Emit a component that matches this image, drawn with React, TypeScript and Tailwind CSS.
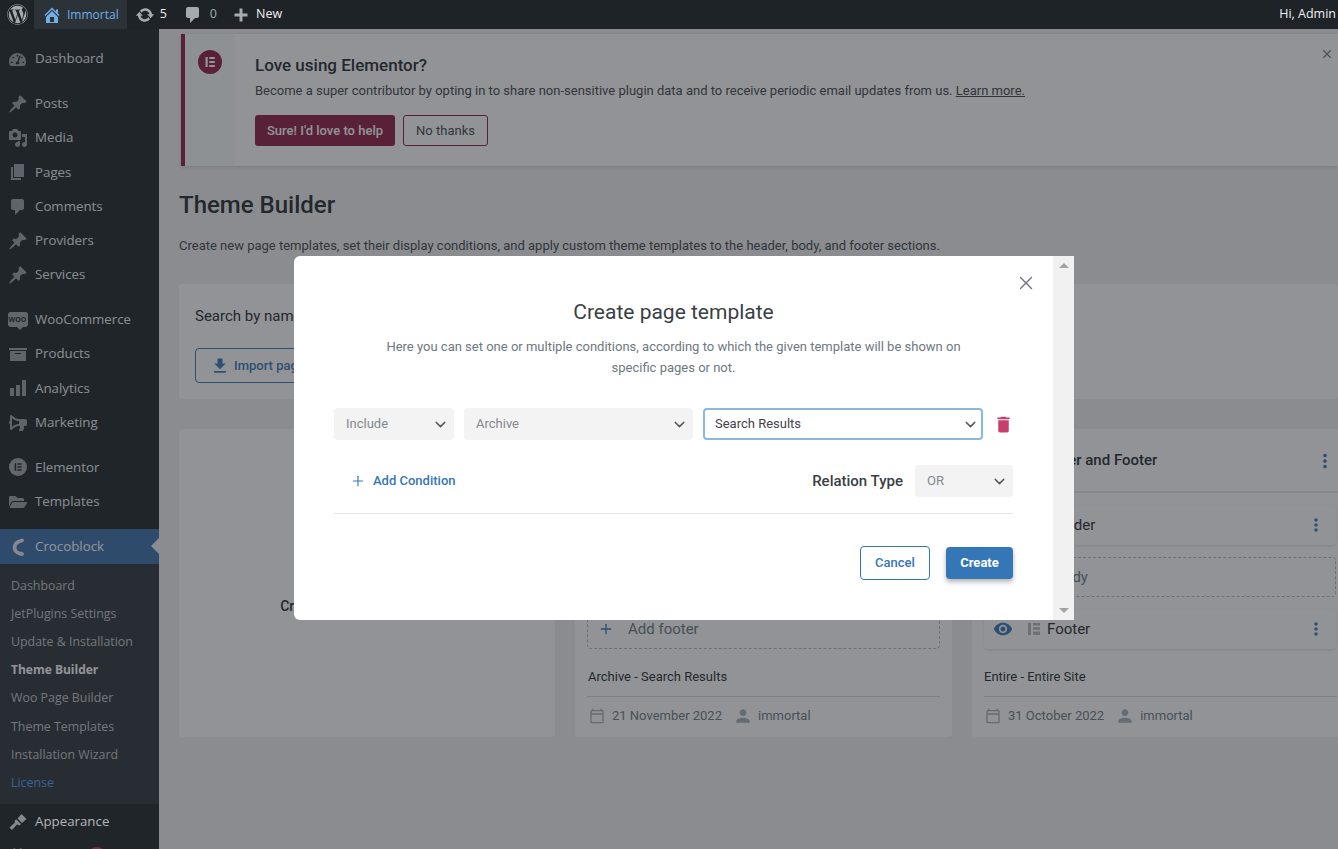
import React from "react";
import { FaWordpress, FaTachometerAlt, FaBullhorn, FaFolderOpen, FaPlug } from "react-icons/fa";
import { MdDelete, MdVisibility, MdMoreVert, MdPerson, MdFileDownload, MdOutlineCalendarToday } from "react-icons/md";
import { ChevronDown, X, Plus } from "lucide-react";

const iconC = "text-[#9ca1a6]";

const Dash = ({ d, size = 20 }: { d: string; size?: number }) => (
  <svg width={size} height={size} viewBox="0 0 20 20" fill="currentColor">
    <path d={d} fillRule="evenodd" />
  </svg>
);
const pinD = "M10.440 3.020l1.820-1.820 6.360 6.350-1.830 1.820c-1.050-.68-2.480-.57-3.410.36l-.75.75c-.92.93-1.040 2.350-.35 3.410l-1.830 1.820-2.410-2.410-2.800 2.790c-.42.42-3.380 2.710-3.800 2.290s1.860-3.390 2.280-3.810l2.790-2.790L4.100 9.360l1.830-1.820c1.050.69 2.480.57 3.400-.36l.75-.75c.93-.92 1.050-2.350.36-3.410z";
const mediaD = "M13 11V4c0-.55-.45-1-1-1h-1.670L9 1H5L3.670 3H2c-.55 0-1 .45-1 1v7c0 .55.45 1 1 1h10c.55 0 1-.45 1-1zM7 4.500c1.380 0 2.500 1.120 2.500 2.500S8.380 9.500 7 9.500 4.500 8.380 4.500 7 5.620 4.500 7 4.500zM14 6h5v10.500c0 1.380-1.120 2.500-2.500 2.500S14 17.880 14 16.500s1.120-2.500 2.500-2.500c.17 0 .34.020.5.050V9h-3V6zm-4 8.050V13h2v3.500c0 1.380-1.120 2.500-2.500 2.500S7 17.880 7 16.500 8.120 14 9.500 14c.17 0 .34.020.5.050z";
const pageD = "M6 15V2h10v13H6zm-1 1h8v2H3V5h2v11z";
const commentD = "M5 2h9c1.100 0 2 .9 2 2v7c0 1.100-.9 2-2 2h-2l-5 5v-5H5c-1.100 0-2-.9-2-2V4c0-1.100.9-2 2-2z";
const homeD = "M16 8.500l1.530 1.530-1.060 1.060L10 4.620l-6.470 6.470-1.060-1.060L10 2.500l4 4v-2h2v4zm-6-2.460l6 5.990V18H4v-5.970zM12 17v-5H8v5h4z";
const updateD = "M10.200 3.280c3.530 0 6.430 2.610 6.900 6h2.080l-3.500 4-3.500-4h2.320c-.45-1.970-2.210-3.440-4.300-3.440-1.450 0-2.730.71-3.540 1.800L4.950 5.660C6.230 4.200 8.110 3.280 10.200 3.280zm-.4 13.440c-3.520 0-6.430-2.610-6.900-6H.82l3.500-4c1.170 1.330 2.330 2.670 3.500 4H5.500c.45 1.970 2.210 3.440 4.300 3.440 1.450 0 2.730-.71 3.540-1.800l1.710 1.980c-1.280 1.460-3.160 2.380-5.250 2.380z";
const analyticsD = "M18 18V2h-4v16h4zm-6 0V7H8v11h4zm-6 0v-8H2v8h4z";
const archiveD = "M19 4v2H1V4h18zM2 7h16v10H2V7zm11 3V9H7v1h6z";
const brushD = "M13.500 2l5 5-4.500 4-4.500-4.500zM8.500 7.500l4.500 4.500-1.500 1.500-2.500-1-5 5.500-2.500-2.500 5.500-5-.5-2z";

const Croco = () => (
  <svg width="20" height="20" viewBox="0 0 20 20" fill="none" stroke="currentColor" strokeWidth="3.800" strokeLinecap="round">
    <path d="M14 3.500C9.500 4.500 6.500 7 6.500 10.500S9.500 16.500 14 17" />
  </svg>
);
const Pin = () => <Dash d={pinD} />;
const Woo = () => (
  <span className="relative flex h-[15px] w-[20px] items-center justify-center rounded-[3px] bg-[#a3a7ab] text-[7px] font-bold leading-none text-[#1d2327]">
    WOO
    <span className="absolute bottom-[-3px] left-[9px] h-0 w-0 border-x-[3px] border-t-[3px] border-x-transparent border-t-[#a3a7ab]" />
  </span>
);
const ElIcon = ({ size = 20, fg = "#1d2327", bg = "#a3a7ab" }: { size?: number; fg?: string; bg?: string }) => (
  <svg width={size} height={size} viewBox="0 0 24 24">
    <circle cx="12" cy="12" r="12" fill={bg} />
    <path d="M7.500 7h2.200v10H7.500zM11.300 7h5.500v2h-5.500zM11.300 11h5.500v2h-5.500zM11.300 15h5.500v2h-5.500z" fill={fg} />
  </svg>
);

type Item = { label: string; icon: React.ReactNode };
const groups: Item[][] = [
  [{ label: "Dashboard", icon: <FaTachometerAlt size={17} /> }],
  [
    { label: "Posts", icon: <Pin /> },
    { label: "Media", icon: <Dash d={mediaD} /> },
    { label: "Pages", icon: <Dash d={pageD} /> },
    { label: "Comments", icon: <Dash d={commentD} /> },
    { label: "Providers", icon: <Pin /> },
    { label: "Services", icon: <Pin /> },
  ],
  [
    { label: "WooCommerce", icon: <Woo /> },
    { label: "Products", icon: <Dash d={archiveD} /> },
    { label: "Analytics", icon: <Dash d={analyticsD} /> },
    { label: "Marketing", icon: <FaBullhorn size={18} className="-scale-x-100" /> },
  ],
  [
    { label: "Elementor", icon: <ElIcon size={18} /> },
    { label: "Templates", icon: <FaFolderOpen size={18} /> },
  ],
];

const sub = ["Dashboard", "JetPlugins Settings", "Update & Installation", "Theme Builder", "Woo Page Builder", "Theme Templates", "Installation Wizard", "License"];

function MenuRow({ item }: { item: Item }) {
  return (
    <div className="flex h-[34.25px] items-center text-[#eef0f1]">
      <span className={`flex w-[35px] shrink-0 items-center justify-center ${iconC}`}>{item.icon}</span>
      <span className="text-[13.3px] leading-none">{item.label}</span>
    </div>
  );
}

function Sidebar() {
  return (
    <aside className="w-[159px] shrink-0 bg-[#1d2327] pt-[13px] font-['Open_Sans',sans-serif]">
      <div className="flex flex-col gap-[10.5px]">
        {groups.map((g, i) => (
          <div key={i}>
            {g.map((it) => (
              <MenuRow key={it.label} item={it} />
            ))}
          </div>
        ))}
      </div>
      <div className="relative mt-[10.25px] flex h-[35px] items-center bg-[#396eab] text-white">
        <span className="flex w-[35px] shrink-0 items-center justify-center text-[#e6e9ec]">
          <Croco />
        </span>
        <span className="text-[13.3px] leading-none">Crocoblock</span>
        <span className="absolute right-0 top-[9px] h-0 w-0 border-y-[8px] border-r-[8px] border-y-transparent border-r-[#f1f1f1]" />
      </div>
      <div className="h-[240px] bg-[#2c3338] pt-[8px]">
        {sub.map((s) => (
          <div
            key={s}
            className={`flex h-[28.15px] items-center pl-[11px] leading-none ${
              s === "Theme Builder" ? "text-[12px] font-bold text-white" : s === "License" ? "text-[12.4px] text-[#4a9ef5]" : "text-[12.4px] text-[#c3c4c7]"
            }`}
          >
            {s}
          </div>
        ))}
      </div>
      <div className="flex h-[35px] items-center">
        <span className="relative z-20 flex w-[35px] shrink-0 items-center justify-center text-[#85898d]">
          <Dash d={brushD} />
        </span>
        <span className="relative z-20 text-[13.3px] leading-none text-[#b4b6b8]">Appearance</span>
      </div>
      <div className="flex h-[34px] items-center">
        <span className={`flex w-[35px] shrink-0 items-center justify-center ${iconC}`}>
          <FaPlug size={17} />
        </span>
        <span className="ml-[53px] h-[18px] w-[18px] rounded-full bg-[#d63638]" />
      </div>
    </aside>
  );
}

function TopBar() {
  return (
    <header className="relative z-20 flex h-[29px] items-center justify-between bg-[#1d2327] font-['Open_Sans',sans-serif] text-[12.5px] text-[#f0f0f1]">
      <div className="flex h-full items-center">
        <span className="flex w-[34px] items-center justify-center text-[#a7aaad]">
          <FaWordpress size={21} />
        </span>
        <span className="flex h-full items-center gap-[5px] bg-[#2c3338] px-[8px] text-[12px] text-[#72aee6]">
          <Dash d={homeD} />
          Immortal
        </span>
        <span className="ml-[8px] flex items-center gap-[5px]">
          <span className="text-[#a7aaad]">
            <Dash d={updateD} />
          </span>
          <span>5</span>
        </span>
        <span className="ml-[16px] flex items-center gap-[7px] text-[#a7aaad]">
          <Dash d={commentD} />
          <span>0</span>
        </span>
        <span className="ml-[15px] flex items-center gap-[6px]">
          <svg width="18" height="18" viewBox="0 0 18 18" fill="#a7aaad">
            <path d="M7.500 2.500h3v5h5v3h-5v5h-3v-5h-5v-3h5z" />
          </svg>
          <span>New</span>
        </span>
      </div>
      <span className="pr-[2px]">Hi, Admin</span>
    </header>
  );
}

function Notice() {
  return (
    <div className="relative ml-[22px] mt-[5px] flex h-[132px] border-l-[4px] border-[#8d1a43] bg-white shadow-[0_1px_4px_rgba(0,0,0,0.15)]">
      <div className="flex w-[50px] justify-center bg-[#f9fafa] pt-[16px]">
        <ElIcon size={24} fg="#ffffff" bg="#8d1a43" />
      </div>
      <div className="pl-[20px] pt-[19px]">
        <div className="text-[17px] font-medium leading-[24px] text-[#23282d]">Love using Elementor?</div>
        <div className="mt-[4px] text-[13px] leading-[20px] text-[#3f444b]">
          Become a super contributor by opting in to share non-sensitive plugin data and to receive periodic email updates from us.{" "}
          <span className="text-[#3f444b] underline">Learn more.</span>
        </div>
        <div className="mt-[14px] flex gap-[8px]">
          <span className="flex h-[31px] w-[140px] items-center justify-center rounded-[3px] bg-[#8d1a43] text-[13px] font-medium text-white">Sure! I'd love to help</span>
          <span className="flex h-[31px] w-[85px] items-center justify-center rounded-[3px] border border-[#8d1a43] bg-white text-[13px] text-[#3f444b]">No thanks</span>
        </div>
      </div>
      <X size={14} strokeWidth={2} className="absolute right-[4px] top-[13px] text-[#787c82]" />
    </div>
  );
}

function Row({ label, dashed }: { label: string; dashed?: boolean }) {
  if (dashed)
    return (
      <div className="flex h-[40px] items-center rounded-[4px] border border-dashed border-[#b8bbc0] pl-[10px] text-[15px] text-[#6d7882]">
        <Plus size={16} strokeWidth={2} className="mr-[14px] text-[#3577b6]" />
        Add {label.toLowerCase()}
      </div>
    );
  return (
    <div className="flex h-[40px] items-center rounded-[4px] bg-white pl-[9px] pr-[10px] text-[15px] text-[#23282d] shadow-[0_1px_3px_rgba(0,0,0,0.12)]">
      <MdVisibility size={20} className="text-[#3577b6]" />
      <svg width="14" height="14" viewBox="0 0 14 14" fill="#b4b6b9" className="ml-[14px] mr-[6px]">
        <path d="M1 1h3v12H1zM6 1h7v2.500H6zM6 5.250h7v2.500H6zM6 9.500h7V13H6z" />
      </svg>
      <span className="flex-1">{label}</span>
      <MdMoreVert size={20} className="text-[#3577b6]" />
    </div>
  );
}

function Card({ title, cond, date, rows, last }: { title: string; cond: string; date: string; rows: [string, boolean][]; last?: boolean }) {
  return (
    <div className="flex h-[308px] flex-col rounded-[4px] bg-white">
      <div className="flex h-[64px] items-center justify-between border-b-[2px] border-[#e6e8ea] pl-[61px] pr-[13px] pt-[1px] text-[15px] font-medium text-[#23282d]">
        {title}
        <MdMoreVert size={22} className="text-[#3577b6]" />
      </div>
      <div className={`mt-[12px] flex flex-col gap-[12px] pl-[12px] ${last ? "pr-[13px]" : "pr-[12px]"}`}>
        {rows.map(([l, d]) => (
          <Row key={l} label={l} dashed={d} />
        ))}
      </div>
      <div className={`mx-[12px] mt-[19px] border-b border-[#d5d8dc] pb-[10px] text-[13px] leading-[18px] text-[#23282d] ${last ? "" : "pl-[1px]"}`}>{cond}</div>
      <div className={`flex items-center pt-[9px] text-[13px] leading-[18px] text-[#6d7882] ${last ? "pl-[13px]" : "pl-[14px]"}`}>
        <MdOutlineCalendarToday size={16} className="mr-[7px] text-[#a4afb7]" />
        {date}
        <MdPerson size={20} className="ml-[11px] mr-[5px] text-[#a4afb7]" />
        immortal
      </div>
    </div>
  );
}

function Content() {
  return (
    <main className="h-[820px] min-w-0 flex-1 overflow-hidden bg-[#f1f1f1] font-['Roboto',sans-serif]">
      <Notice />
      <div className="w-[1179px] pl-[20px]">
        <h1 className="mt-[22px] text-[24px] font-medium leading-[34px] text-[#23282d]">Theme Builder</h1>
        <p className="mt-[14px] whitespace-nowrap text-[13px] leading-[20px] text-[#3f444b]">
          Create new page templates, set their display conditions, and apply custom theme templates to the header, body, and footer sections.
        </p>
        <div className="mt-[28px] h-[115px] rounded-[4px] bg-white pl-[16px] pt-[21px]">
          <div className="text-[15px] leading-[22px] text-[#23282d]">Search by name</div>
          <span className="mt-[21px] flex h-[35px] w-[210px] items-center rounded-[4px] border border-[#3577b6] pl-[14px] text-[13px] font-medium text-[#3577b6]">
            <MdFileDownload size={20} className="mr-[4px]" />
            Import page template
          </span>
        </div>
        <div className="mt-[30px] grid grid-cols-[376px_377px_377px] gap-[20px]">
          <div className="flex h-[308px] items-center justify-center rounded-[4px] bg-white pr-[10px] pt-[46px] text-[14px] font-medium text-[#23282d]">Create new page template</div>
          <Card title="Search Results" cond="Archive - Search Results" date="21 November 2022" rows={[["Header", true], ["Body", false], ["Footer", true]]} />
          <Card last title="Header and Footer" cond="Entire - Entire Site" date="31 October 2022" rows={[["Header", false], ["Body", true], ["Footer", false]]} />
        </div>
      </div>
    </main>
  );
}

function Select({ label, cls, active }: { label: string; cls: string; active?: boolean }) {
  return (
    <div
      className={`flex h-[32px] shrink-0 items-center justify-between rounded-[4px] text-[13px] ${cls} ${
        active ? "border-2 border-[#8ab9dc] bg-white pl-[10px] pr-[2px] text-[#3f444b]" : "bg-[#f3f3f3] pl-[12px] pr-[5px] text-[#85888c]"
      }`}
    >
      {label}
      <ChevronDown size={17} strokeWidth={2} className="text-[#55595e]" />
    </div>
  );
}

function Modal() {
  return (
    <div className="absolute left-[294px] top-[256px] z-30 flex h-[364px] w-[780px] rounded-l-[6px] bg-white font-['Roboto',sans-serif]">
      <div className="relative min-w-0 flex-1 px-[40px] pt-[41px]">
        <X size={22} strokeWidth={1.5} className="absolute right-[16px] top-[16px] text-[#6d7178]" />
        <h2 className="text-center text-[21px] leading-[30px] text-[#3a3f45]">Create page template</h2>
        <p className="mx-auto mt-[9px] w-[600px] text-center text-[13px] leading-[21px] text-[#6d7882]">
          Here you can set one or multiple conditions, according to which the given template will be shown on specific pages or not.
        </p>
        <div className="mt-[30px] flex items-center gap-[10px]">
          <Select label="Include" cls="w-[120px]" />
          <Select label="Archive" cls="w-[229px]" />
          <Select label="Search Results" cls="w-[280px]" active />
          <MdDelete size={21} className="shrink-0 text-[#c83e6c]" />
        </div>
        <div className="mt-[25px] flex h-[32px] items-center justify-between">
          <span className="flex items-center pl-[16px] text-[13px] font-medium text-[#3577b6]">
            <Plus size={16} strokeWidth={1.7} className="mr-[7px]" />
            Add Condition
          </span>
          <span className="flex items-center">
            <span className="mr-[12px] text-[15px] font-medium text-[#3a3f45]">Relation Type</span>
            <Select label="OR" cls="w-[98px]" />
          </span>
        </div>
        <div className="mt-[16px] border-b border-[#e1e3e5]" />
        <div className="mt-[32px] flex items-center justify-end gap-[16px]">
          <span className="flex h-[34px] w-[70px] items-center justify-center rounded-[4px] border border-[#3577b6] text-[13px] font-medium text-[#3577b6]">Cancel</span>
          <span className="flex h-[32px] w-[67px] items-center justify-center rounded-[4px] bg-[#3577b6] text-[13px] font-bold text-white shadow-[0_3px_5px_rgba(0,0,0,0.3)]">Create</span>
        </div>
      </div>
      <div className="flex w-[21px] shrink-0 flex-col items-center justify-between bg-[#f1f1f1] py-[7px]">
        <span className="h-0 w-0 border-x-[5px] border-b-[5px] border-x-transparent border-b-[#a3a3a3]" />
        <span className="h-0 w-0 border-x-[5px] border-t-[5px] border-x-transparent border-t-[#a3a3a3]" />
      </div>
    </div>
  );
}

export default function App() {
  return (
    <div className="relative h-[849px] overflow-hidden bg-[#f1f1f1]">
      <TopBar />
      <div className="flex h-[820px] overflow-hidden">
        <Sidebar />
        <Content />
      </div>
      <div className="absolute inset-0 z-10 bg-[rgba(35,40,45,0.5)]" />
      <Modal />
    </div>
  );
}
